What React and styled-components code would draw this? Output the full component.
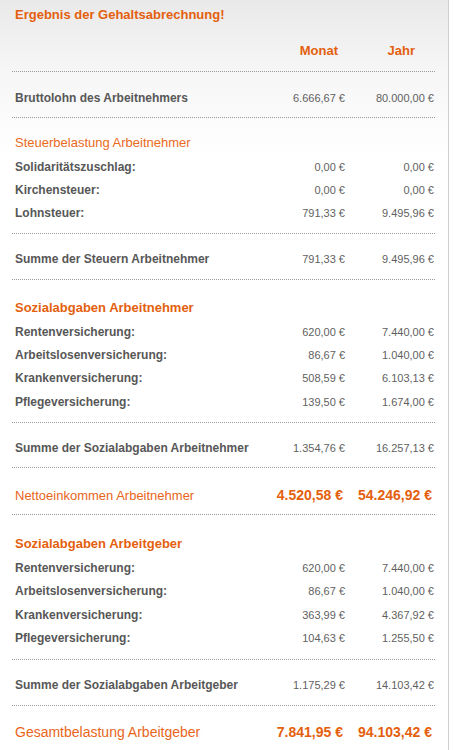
import React from "react";
import styled, { createGlobalStyle } from "styled-components";

const GlobalStyle = createGlobalStyle`
  body {
    margin: 0;
    background: #fff;
    font-family: "Liberation Sans", Arial, sans-serif;
  }
`;

const Panel = styled.div`
  width: 449px;
  height: 750px;
  box-sizing: border-box;
  border-right: 1px solid #cfcfcf;
  background: linear-gradient(#e9e9e9 0px, #f6f6f6 70px, #ffffff 160px);
  padding: 0 13px 0 12px;
  overflow: hidden;
`;

const Title = styled.h1`
  margin: 0;
  padding-left: 3px;
  height: 30px;
  line-height: 30px;
  font-size: 13px;
  font-weight: bold;
  color: #e45f0d;
`;

const Grid = styled.div`
  display: grid;
  grid-template-columns: 1fr 90px 89px;
  align-items: center;
`;

const HeaderRow = styled(Grid)`
  padding: 13px 0 12px;
  line-height: 16px;
`;

const HeaderCell = styled.div`
  text-align: right;
  padding-right: ${(p) => p.pr}px;
  font-size: 13px;
  font-weight: bold;
  color: #e45f0d;
`;

const Divider = styled.div`
  border-top: 1px dotted #9a9a9a;
`;

const SumRow = styled(Grid)`
  height: ${(p) => p.h || 45}px;
  box-sizing: border-box;
  padding-top: ${(p) => p.pt || 6}px;
`;

const Section = styled.div`
  padding-top: ${(p) => p.pt}px;
  padding-bottom: ${(p) => p.pb}px;
`;

const SectionTitle = styled.div`
  padding-left: 3px;
  height: 24px;
  line-height: 24px;
  font-size: 13px;
  font-weight: ${(p) => (p.bold ? "bold" : "normal")};
  color: ${(p) => (p.bold ? "#e45f0d" : "#ea6a1c")};
`;

const ItemRow = styled(Grid)`
  height: 23.33px;
`;

const Label = styled.div`
  padding-left: 3px;
  font-size: 12px;
  font-weight: bold;
  color: #575757;
  white-space: nowrap;
`;

const Value = styled.div`
  text-align: right;
  padding-right: 1px;
  font-size: 11px;
  color: #5f5f5f;
  white-space: nowrap;
`;

const AccentLabel = styled.div`
  padding-left: 3px;
  font-size: ${(p) => (p.big ? 14 : 13)}px;
  color: #e8651a;
  white-space: nowrap;
`;

const AccentValue = styled.div`
  text-align: right;
  padding-right: 3px;
  font-size: 14px;
  font-weight: bold;
  color: #e45f0d;
  white-space: nowrap;
`;

const taxes = [
  ["Solidaritätszuschlag:", "0,00 €", "0,00 €"],
  ["Kirchensteuer:", "0,00 €", "0,00 €"],
  ["Lohnsteuer:", "791,33 €", "9.495,96 €"],
];

const employeeSocial = [
  ["Rentenversicherung:", "620,00 €", "7.440,00 €"],
  ["Arbeitslosenversicherung:", "86,67 €", "1.040,00 €"],
  ["Krankenversicherung:", "508,59 €", "6.103,13 €"],
  ["Pflegeversicherung:", "139,50 €", "1.674,00 €"],
];

const employerSocial = [
  ["Rentenversicherung:", "620,00 €", "7.440,00 €"],
  ["Arbeitslosenversicherung:", "86,67 €", "1.040,00 €"],
  ["Krankenversicherung:", "363,99 €", "4.367,92 €"],
  ["Pflegeversicherung:", "104,63 €", "1.255,50 €"],
];

function Items({ rows }) {
  return rows.map(([label, month, year]) => (
    <ItemRow key={label}>
      <Label>{label}</Label>
      <Value>{month}</Value>
      <Value>{year}</Value>
    </ItemRow>
  ));
}

function Sum({ label, month, year, ...rest }) {
  return (
    <SumRow {...rest}>
      <Label>{label}</Label>
      <Value>{month}</Value>
      <Value>{year}</Value>
    </SumRow>
  );
}

function Total({ label, month, year, big, ...rest }) {
  return (
    <SumRow {...rest}>
      <AccentLabel big={big}>{label}</AccentLabel>
      <AccentValue>{month}</AccentValue>
      <AccentValue>{year}</AccentValue>
    </SumRow>
  );
}

export default function App() {
  return (
    <>
      <GlobalStyle />
      <Panel>
        <Title>Ergebnis der Gehaltsabrechnung!</Title>
        <HeaderRow>
          <div />
          <HeaderCell pr={8}>Monat</HeaderCell>
          <HeaderCell pr={20}>Jahr</HeaderCell>
        </HeaderRow>
        <Divider />
        <Sum label="Bruttolohn des Arbeitnehmers" month="6.666,67 €" year="80.000,00 €" />
        <Divider />

        <Section pt={13} pb={8}>
          <SectionTitle>Steuerbelastung Arbeitnehmer</SectionTitle>
          <Items rows={taxes} />
        </Section>
        <Divider />
        <Sum label="Summe der Steuern Arbeitnehmer" month="791,33 €" year="9.495,96 €" />
        <Divider />

        <Section pt={16} pb={9}>
          <SectionTitle bold>Sozialabgaben Arbeitnehmer</SectionTitle>
          <Items rows={employeeSocial} />
        </Section>
        <Divider />
        <Sum label="Summe der Sozialabgaben Arbeitnehmer" month="1.354,76 €" year="16.257,13 €" h={44} />
        <Divider />
        <Total label="Nettoeinkommen Arbeitnehmer" month="4.520,58 €" year="54.246,92 €" h={46} pt={8} />
        <Divider />

        <Section pt={17} pb={9}>
          <SectionTitle bold>Sozialabgaben Arbeitgeber</SectionTitle>
          <Items rows={employerSocial} />
        </Section>
        <Divider />
        <Sum label="Summe der Sozialabgaben Arbeitgeber" month="1.175,29 €" year="14.103,42 €" />
        <Divider />
        <Total big label="Gesamtbelastung Arbeitgeber" month="7.841,95 €" year="94.103,42 €" h={46} pt={6} />
      </Panel>
    </>
  );
}
